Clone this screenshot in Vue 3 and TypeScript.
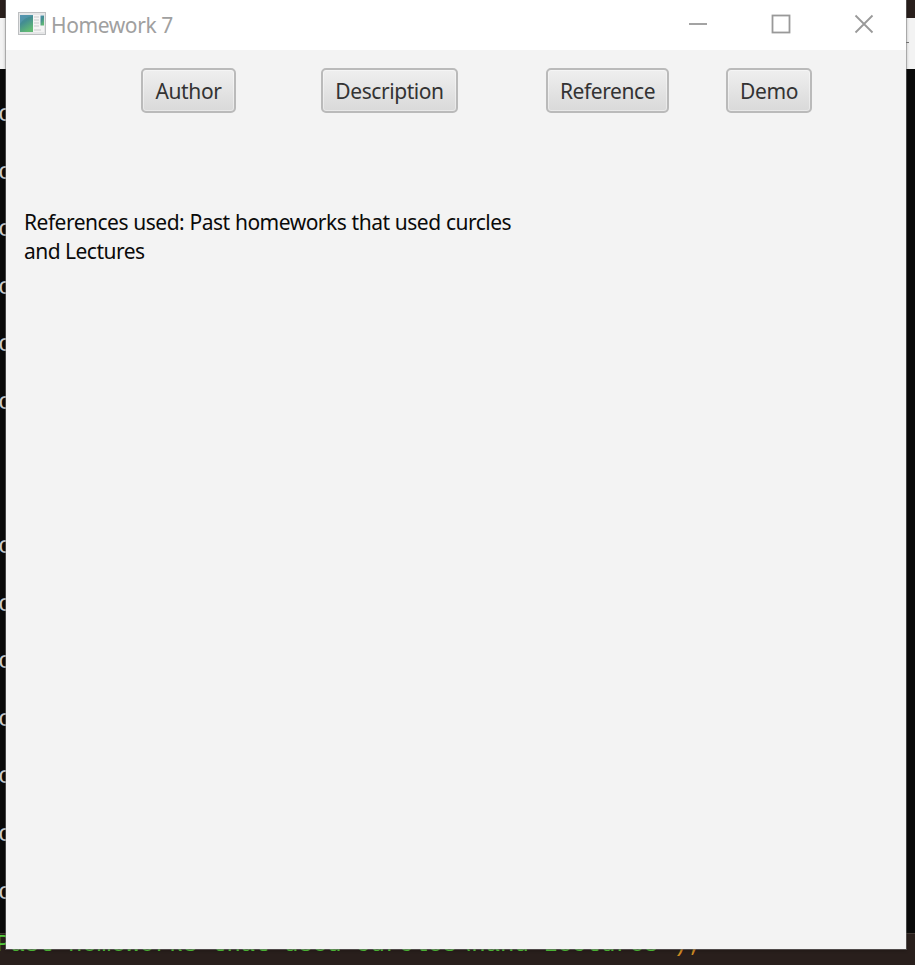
<script setup lang="ts">
interface NavItem {
  label: string
  name: string
}

const navItems: NavItem[] = [
  { label: 'Author', name: 'author' },
  { label: 'Description', name: 'description' },
  { label: 'Reference', name: 'reference' },
  { label: 'Demo', name: 'demo' },
]

// Terminal rows behind the window; an empty string is a blank row.
const rows: string[] = ['c', 'c', 'c', 'c', 'c', 'c', '', '', 'c', 'c', 'c', 'c', 'c', 'c', 'c']
const rowHeights: number[] = rows.map((r) => (r ? 57.6 : 43.2))
</script>

<template>
  <div class="desktop">
    <div class="backdrop">
      <div class="strip"></div>
      <div class="panel"><span class="tick"></span></div>
      <div class="terminal">
        <div v-for="(row, i) in rows" :key="i" class="row" :style="{ height: rowHeights[i] + 'px' }">{{ row }}</div>
      </div>
      <div class="code"><span class="string">Past homeworks that used curcles\nand Lectures"</span><span class="punct">);</span></div>
    </div>

    <main class="window">
      <header class="titlebar">
        <svg class="app-icon" viewBox="0 0 28 23" width="28" height="23">
          <defs>
            <linearGradient id="screen" x1="0" y1="0" x2="0.5" y2="1">
              <stop offset="0" stop-color="#4f8db0" />
              <stop offset="0.45" stop-color="#438d92" />
              <stop offset="1" stop-color="#61b974" />
            </linearGradient>
          </defs>
          <rect x="0.5" y="0.5" width="27" height="22" fill="#e5e6e7" stroke="#bdbfc1" />
          <rect x="2" y="3" width="13" height="17" fill="url(#screen)" />
          <path d="M2 12Q6 5 15 4V3H2Z" fill="#5f9fb7" opacity="0.45" />
          <rect x="15" y="3" width="11" height="17" fill="#f4f4f4" />
          <path d="M16 5h5M16 8h5M16 11h5M16 14h5M16 18h7" stroke="#c9cacb" />
          <rect x="22.5" y="3.5" width="3.5" height="10" fill="url(#screen)" />
        </svg>
        <h1 class="title">Homework 7</h1>
        <div class="controls">
          <svg viewBox="0 0 20 20" width="20" height="20"><path d="M1 10H19" /></svg>
          <svg viewBox="0 0 20 20" width="20" height="20"><rect x="1.5" y="1.5" width="17" height="17" /></svg>
          <svg viewBox="0 0 20 20" width="20" height="20"><path d="M1.5 1.5L18.5 18.5M18.5 1.5L1.5 18.5" /></svg>
        </div>
      </header>
      <nav class="nav">
        <button v-for="item in navItems" :key="item.name" type="button" class="btn" :class="item.name">
          <span>{{ item.label }}</span>
        </button>
      </nav>
      <p class="message"><span class="line first">References used: Past homeworks that used curcles</span><span class="line second">and Lectures</span></p>
    </main>
  </div>
</template>

<style>
body {
  margin: 0;
  overflow: hidden;
}
</style>

<style scoped>
.desktop {
  position: relative;
  width: 915px;
  height: 965px;
  overflow: hidden;
  background: #291f1c;
  font-family: "Noto Sans", "Open Sans", sans-serif;
}
.backdrop {
  display: flex;
  flex-direction: column;
  height: 100%;
}
.strip {
  flex: none;
  height: 18px;
  background: #291f1c;
}
.panel {
  flex: none;
  display: flex;
  justify-content: flex-end;
  height: 51px;
  background: #f3f3f3;
}
.tick {
  width: 8px;
  height: 1px;
  margin: 24px 6px 0 0;
  background: #777;
}
.terminal {
  flex: none;
  box-sizing: border-box;
  height: 864px;
  padding-top: 32px;
  overflow: hidden;
  background: #0a0a0a;
  color: #ccc;
  font-family: "Liberation Mono", monospace;
  font-size: 24px;
  line-height: 28px;
}
.row {
  text-indent: -2px;
}
.code {
  height: 32px;
  box-sizing: border-box;
  border-top: 1px solid #443a36;
  font-family: "Liberation Mono", monospace;
  font-size: 24px;
  line-height: 21px;
  text-indent: -4px;
  white-space: pre;
}
.string {
  color: #55cc3c;
}
.punct {
  color: #d08c24;
}
.window {
  position: absolute;
  left: 6px;
  top: 0;
  width: 900px;
  height: 949px;
  background: #f3f3f3;
  box-shadow: 0 0 0 1px rgba(125, 125, 125, 0.5), 0 1px 3px 1px rgba(0, 0, 0, 0.2);
}
.titlebar {
  display: flex;
  align-items: center;
  box-sizing: border-box;
  height: 50px;
  padding-left: 12px;
  padding-right: 32.5px;
  background: #fff;
}
.app-icon {
  flex: none;
  margin-bottom: 3px;
}
.title {
  flex: 1;
  margin: 0 0 0 5px;
  color: #a0a0a0;
  font-size: 21px;
  font-weight: 400;
  line-height: 30px;
  letter-spacing: -0.4px;
}
.controls {
  display: flex;
  gap: 63px;
  margin-bottom: 3px;
}
.controls svg {
  fill: none;
  stroke: #999;
  stroke-width: 1.8;
}
.nav {
  display: flex;
  height: 45px;
  padding: 18px 0 0 135px;
}
.btn {
  box-sizing: border-box;
  height: 45px;
  padding: 0;
  border: 2px solid #bababa;
  border-radius: 5px;
  background: linear-gradient(#efefef, #d9d9d9);
  box-shadow: inset 0 0 0 1px rgba(255, 255, 255, 0.4);
  color: #333;
  font-family: inherit;
  font-size: 21px;
  line-height: 40px;
  letter-spacing: -0.42px;
  white-space: nowrap;
}
.author {
  width: 95px;
  letter-spacing: -0.35px;
}
.description {
  width: 137px;
  margin-left: 85px;
}
.reference {
  width: 123px;
  margin-left: 88px;
}
.demo {
  width: 86px;
  margin-left: 57px;
}
.message {
  margin: 95px 0 0 18px;
  color: #0a0a0a;
  font-size: 21px;
  line-height: 29px;
}
.line {
  display: block;
  white-space: nowrap;
}
.first {
  letter-spacing: -0.51px;
  word-spacing: 0.4px;
}
.second {
  letter-spacing: -0.52px;
}
</style>
